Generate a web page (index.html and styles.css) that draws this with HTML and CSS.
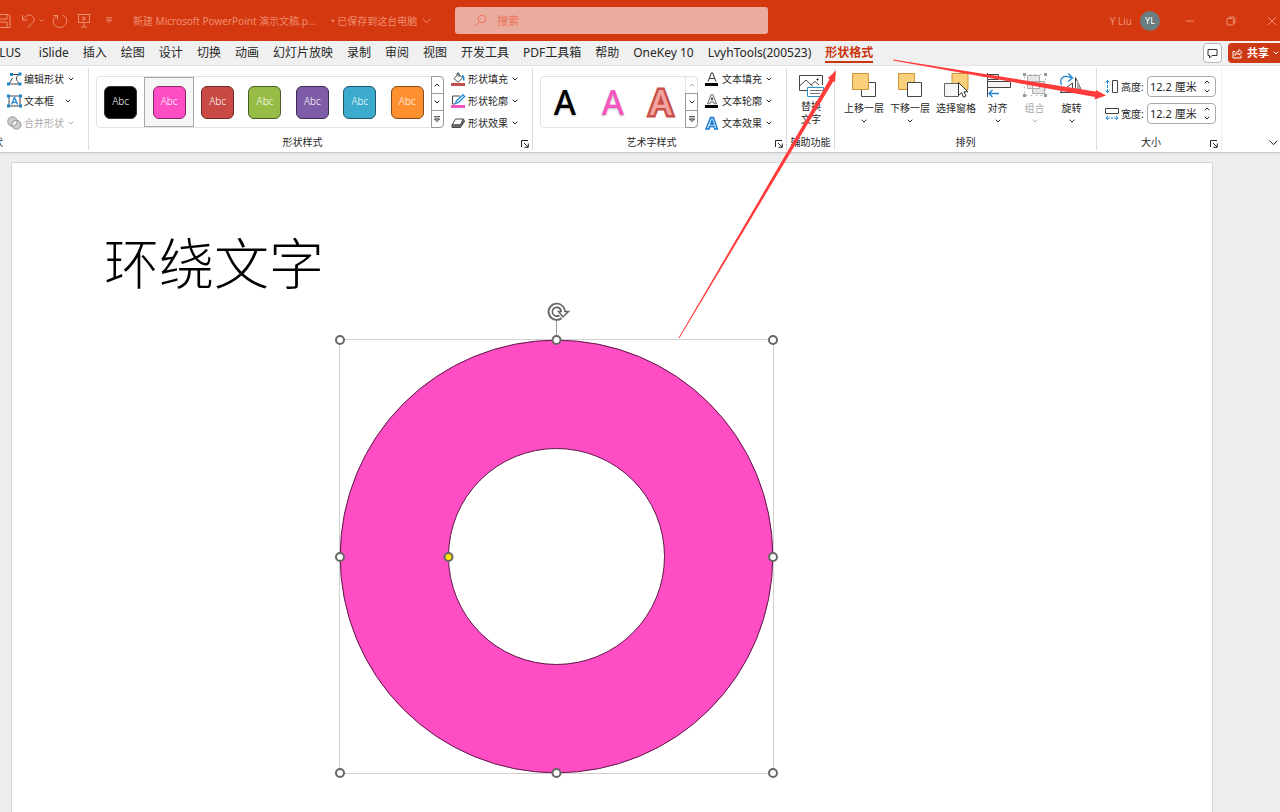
FILE: index.html
```html
<!DOCTYPE html>
<html lang="zh-CN">
<head>
<meta charset="utf-8">
<title>新建 Microsoft PowerPoint 演示文稿</title>
<link rel="stylesheet" href="styles.css">
</head>
<body>
<svg class="defs" aria-hidden="true">
  <symbol id="chev" viewBox="0 0 6 4"><path d="M.7.7 3 3 5.3.7" fill="none" stroke="currentColor"/></symbol>
  <symbol id="wide" viewBox="0 0 9 6"><path d="M.7.7 4.500 4.700 8.300.7" fill="none" stroke="currentColor"/></symbol>
  <symbol id="up" viewBox="0 0 6 4"><path d="M.7 3.3 3 1 5.3 3.3" fill="none" stroke="currentColor"/></symbol>
  <symbol id="more" viewBox="0 0 8 7"><path d="M1 .8h6M1.5 3 4 5.6 6.500 3z" fill="none" stroke="currentColor"/></symbol>
  <symbol id="launch" viewBox="0 0 8 8"><path d="M.5 7V.5H7M3 3l4 4M7.300 3.500v3.800H3.500" fill="none" stroke="currentColor"/></symbol>
</svg>

<header class="titlebar">
  <div class="quick">
    <button aria-label="保存"><svg width="11" height="16" viewBox="0 0 11 16"><path d="M-3 1.500H8.500L10 3v11.500H-3zM-1 1.500v4.500h8V1.500M-1 14V9h8v5" /></svg></button>
    <button class="undo" aria-label="撤消"><svg width="24" height="16" viewBox="0 0 24 16"><path d="M1.500 2v5h5M1.500 7C4 3 7.500 1 10.500 2.500c3 1.500 3.500 5 1 7.500L6.500 14.500M18.500 6.500l2 2 2-2"/></svg></button>
    <button class="redo" aria-label="重复"><svg width="16" height="16" viewBox="0 0 16 16"><path d="M1.500 2.500h4v4M5.500 2.500C1 4.500 0 9.500 3 12.500s8 2.500 10.500-1 1-8-3-9.500"/></svg></button>
    <button class="show" aria-label="放映"><svg width="14" height="16" viewBox="0 0 14 16"><path d="M.5 1.500h13M1.500 1.500V9.500h11V1.500M7 9.500v4M4 14h6M6 3.500v4l3-2z"/></svg></button>
    <button class="custom" aria-label="自定义"><svg width="8" height="7"><use href="#more"/></svg></button>
  </div>
  <div class="doc"><span>新建 Microsoft PowerPoint 演示文稿.p...</span><span class="saved">• 已保存到这台电脑</span><svg width="9" height="6"><use href="#wide"/></svg></div>
  <div class="search">
    <svg width="13" height="14" viewBox="0 0 13 14"><circle cx="8" cy="5" r="3.800"/><path d="M5.300 7.700 1 12.500"/></svg>
    <input type="text" placeholder="搜索" aria-label="搜索">
  </div>
  <div class="account">
    <span>Y Liu</span><span class="avatar">YL</span>
    <button aria-label="最小化"><svg width="10" height="10"><path d="M1 5h8"/></svg></button>
    <button aria-label="还原"><svg width="10" height="10"><rect x="1" y="2.500" width="6.500" height="6.500" rx="1"/><path d="M3 2.500V1h4.500Q9 1 9 2.500V7H7.500"/></svg></button>
    <button aria-label="关闭"><svg width="10" height="10"><path d="M1 1l8 8M9 1 1 9"/></svg></button>
  </div>
</header>

<nav class="tabs">
  <button class="clipped">PLUS</button><button class="islide">iSlide</button><button>插入</button><button>绘图</button><button>设计</button><button>切换</button><button>动画</button><button>幻灯片放映</button><button>录制</button><button>审阅</button><button>视图</button><button>开发工具</button><button>PDF工具箱</button><button>帮助</button><button>OneKey 10</button><button>LvyhTools(200523)</button><button class="active">形状格式</button>
  <div class="right">
    <button class="comment" aria-label="批注"><svg width="11" height="11" viewBox="0 0 11 11"><path d="M1 1.500h9v6H5L2.500 10V7.500H1z" fill="none" stroke="#333"/></svg></button>
    <button class="share"><svg width="11" height="11" viewBox="0 0 11 11"><path d="M3 3.500H1v6.500h8V7.500M3 7.500c0-3 1.500-4 4-4V1.500l3 3-3 2.500V5.500C5 5.500 4 6 3 7.500z" fill="none" stroke="#fff"/></svg>共享<svg width="6" height="4"><use href="#chev"/></svg></button>
  </div>
</nav>

<section class="ribbon">
  <div class="group">
    <div class="body insert">
      <div class="cmds">
        <button><svg class="ic" viewBox="0 0 15 14"><path d="M2 12 5.500 6M5 2.500h7C8 5 9 9 13 12M2.500 12h10" fill="none" stroke="#444"/><g fill="#1d85d0"><path d="M0 10.500h3v3H0zM11.500 10.500h3v3h-3zM3 1h3v3H3zM11.500.5h3v3h-3z"/></g></svg><span>编辑形状</span><svg class="ch"><use href="#chev"/></svg></button>
        <button><svg class="ic" viewBox="0 0 15 14"><path d="M2 2h11v10H2z" fill="none" stroke="#444"/><g fill="#1d85d0"><path d="M0 .5h3v3H0zM12 .5h3v3h-3zM0 10.500h3v3H0zM12 10.500h3v3h-3z"/></g><path d="M4.500 10.500 7.500 3.500l3 7M5.500 8.300h4" fill="none" stroke="#1d85d0" stroke-width="1.300"/></svg><span class="short">文本框</span><svg class="ch"><use href="#chev"/></svg></button>
        <button disabled><svg class="ic" viewBox="0 0 15 14"><circle cx="5.500" cy="5.500" r="4.800" fill="#ccc" stroke="#999"/><circle cx="9.500" cy="8.800" r="4.500" fill="#ccc" stroke="#999"/><path d="M5 8.500a4.500 4.500 0 0 1 5-4 4.800 4.800 0 0 1-5 5.500z" fill="#fff" stroke="#999"/></svg><span>合并形状</span><svg class="ch"><use href="#chev"/></svg></button>
      </div>
    </div>
    <div class="foot cut"><span>状</span></div>
  </div>

  <div class="group">
    <div class="body">
      <div class="gallery shapes">
        <button class="cell"><i class="t black">Abc</i></button><button class="cell sel"><i class="t pink">Abc</i></button><button class="cell"><i class="t red">Abc</i></button><button class="cell"><i class="t green">Abc</i></button><button class="cell"><i class="t purple">Abc</i></button><button class="cell"><i class="t blue">Abc</i></button><button class="cell"><i class="t orange">Abc</i></button>
        <div class="scroll"><button aria-label="上一行"><svg width="6" height="4"><use href="#up"/></svg></button><button aria-label="下一行"><svg width="6" height="4"><use href="#chev"/></svg></button><button aria-label="其他"><svg width="8" height="7"><use href="#more"/></svg></button></div>
      </div>
      <div class="cmds">
        <button><svg class="ic" viewBox="0 0 15 14"><path d="M3 6.500 7.500 2l4 4-4.500 4.300zM6 3.500V1.500q1-1.500 2 0V5" fill="#fff" stroke="#444"/><path d="M11 3.500q2.500 1 1.500 5" fill="none" stroke="#1d85d0" stroke-width="1.500"/><path d="M0 11h14v3H0z" fill="#c0504d"/></svg><span>形状填充</span><svg class="ch"><use href="#chev"/></svg></button>
        <button><svg class="ic" viewBox="0 0 15 14"><path d="M9 2H1.500v8H4" fill="none" stroke="#444"/><path d="M4.500 9.500 5.500 6.500 12 .8l1.700 1.700L7.500 8.500z" fill="#d6ecfa" stroke="#1d85d0" stroke-width="1.200"/><path d="M0 11h14v3H0z" fill="#f050c0"/></svg><span>形状轮廓</span><svg class="ch"><use href="#chev"/></svg></button>
        <button><svg class="ic" viewBox="0 0 15 14"><path d="M1 9 4.500 3h8L9.500 9z" fill="#fff" stroke="#444"/><path d="M1 9v2.500h8.500L13.500 5.500 12.500 3 9.500 9z" fill="#777" stroke="#444"/></svg><span>形状效果</span><svg class="ch"><use href="#chev"/></svg></button>
      </div>
    </div>
    <div class="foot launch"><span>形状样式</span><button aria-label="形状样式选项"><svg width="8" height="8"><use href="#launch"/></svg></button></div>
  </div>

  <div class="group">
    <div class="body">
      <div class="gallery words">
        <button class="cell"><b class="wa k">A</b></button><button class="cell"><b class="wa p">A</b></button><button class="cell"><b class="wa r">A</b></button>
        <div class="scroll"><button disabled aria-label="上一行"><svg width="6" height="4"><use href="#up"/></svg></button><button aria-label="下一行"><svg width="6" height="4"><use href="#chev"/></svg></button><button aria-label="其他"><svg width="8" height="7"><use href="#more"/></svg></button></div>
      </div>
      <div class="cmds">
        <button><svg class="ic" viewBox="0 0 15 14"><path d="M3 9.500 6.500.8h1L11 9.500M4.200 6.500h5.600" fill="none" stroke="#333"/><path d="M0 11h13v3H0z"/></svg><span>文本填充</span><svg class="ch"><use href="#chev"/></svg></button>
        <button><svg class="ic" viewBox="0 0 15 14"><path d="M2.500 9.800 6 .8h2l3.500 9H9.300L8.700 8H5.300l-.6 1.800zM6 6h2L7 3z" fill="#fff" stroke="#444" stroke-width=".8"/><path d="M0 11h13v3H0z"/></svg><span>文本轮廓</span><svg class="ch"><use href="#chev"/></svg></button>
        <button><svg class="ic" viewBox="0 0 15 14"><path d="M1 13 5.500 1.500h3L12.500 13H9.700L8.800 10.500H5L4 13zM5.800 8h2.500L7 4.500z" fill="#bfe0f7" stroke="#1576cc" stroke-width="1.300"/></svg><span>文本效果</span><svg class="ch"><use href="#chev"/></svg></button>
      </div>
    </div>
    <div class="foot launch"><span>艺术字样式</span><button aria-label="艺术字选项"><svg width="8" height="8"><use href="#launch"/></svg></button></div>
  </div>

  <div class="group">
    <div class="body">
      <button class="big alt"><svg width="26" height="26" viewBox="0 0 26 26"><path d="M9 18.500H1.500v-15h23V13" fill="#fff" stroke="#444"/><path d="M1.500 14 8 8l7 6.500M13 13l4-3.500 4 3.500" fill="none" stroke="#444"/><circle cx="19.500" cy="7.500" r="1"/><path d="M9.500 15.500h16v9h-16z" fill="#fff" stroke="#2b90cc"/><path d="M12 18.500h13M12 21.500h10" stroke="#777"/></svg><span>替换<br>文字</span></button>
    </div>
    <div class="foot"><span>辅助功能</span></div>
  </div>

  <div class="group">
    <div class="body arrange">
      <button class="big wide"><svg width="26" height="26" viewBox="0 0 26 26"><path d="M10.500 10.500h14v14h-14z" fill="#fff" stroke="#444"/><path d="M1.500 1.500h16v16h-16z" fill="#fbd07c" stroke="#cf9532"/></svg><span>上移一层</span><svg class="ch"><use href="#chev"/></svg></button>
      <button class="big wide"><svg width="26" height="26" viewBox="0 0 26 26"><path d="M1.500 1.500h16v16h-16z" fill="#fbd07c" stroke="#cf9532"/><path d="M10.500 10.500h14v14h-14z" fill="#fff" stroke="#444"/></svg><span>下移一层</span><svg class="ch"><use href="#chev"/></svg></button>
      <button class="big wide"><svg width="26" height="26" viewBox="0 0 26 26"><path d="M9 1.500h16v16H9z" fill="#fbd07c" stroke="#cf9532"/><path d="M1.500 11.500h14v13h-14z" fill="#f5f5f5" stroke="#666"/><path d="M15.500 10.500v13l3-2.800 2 4.500 2.500-1.200-2-4.200h4z" fill="#fff" stroke="#333"/></svg><span>选择窗格</span></button>
      <button class="big"><svg width="26" height="26" viewBox="0 0 26 26"><path d="M2.500 1v24" stroke="#444"/><path d="M2.500 2.500h11v5h-11zM2.500 9.500h23v6h-23z" fill="#f4f4f4" stroke="#444"/><path d="M4 21.500h10M7.500 18 4 21.500 7.500 25" fill="none" stroke="#1d85d0" stroke-width="1.300"/></svg><span>对齐</span><svg class="ch"><use href="#chev"/></svg></button>
      <button class="big" disabled><svg width="26" height="26" viewBox="0 0 26 26"><path d="M5.500 3.500h12v13h-12zM10.500 9.500h12v12h-12z" fill="#e6e6e6" stroke="#aaa"/><path d="M10.500 9.500h7v7h-7z" fill="#fff" stroke="#aaa"/><path d="M2.500 2.500h21v21h-21z" fill="none" stroke="#bbb" stroke-dasharray="2 3"/><path d="M1 1h3v3H1zM22 1h3v3h-3zM1 22h3v3H1zM22 22h3v3h-3z" fill="#999"/></svg><span>组合</span><svg class="ch"><use href="#chev"/></svg></button>
      <button class="big"><svg width="26" height="26" viewBox="0 0 26 26"><path d="M1 20.500h12.500V11zM16.500 20.500V5.500l7 15z" fill="#fff" stroke="#444"/><path d="M18 8v12h5z" fill="#aaa"/><path d="M2.500 13C-.5 5 6 2.500 13 6M9.500 1.500l4 4.500-4.500 3.500" fill="none" stroke="#1d85d0" stroke-width="1.300"/></svg><span>旋转</span><svg class="ch"><use href="#chev"/></svg></button>
    </div>
    <div class="foot"><span>排列</span></div>
  </div>

  <div class="group last">
    <div class="body size">
      <div class="field"><svg width="14" height="15" viewBox="0 0 14 15"><path d="M2.500 1v4M2.500 10v4M.5 3.500l2-2 2 2M.5 11.500l2 2 2-2M2.500 6v3" fill="none" stroke="#1d85d0"/><path d="M7.500 1.500h5v12h-5z" fill="#fff" stroke="#444"/></svg><label for="h">高度:</label><div class="spin"><input id="h" type="text" value="12.2 厘米"><span><button aria-label="增加高度"><svg width="6" height="4"><use href="#up"/></svg></button><button aria-label="减少高度"><svg width="6" height="4"><use href="#chev"/></svg></button></span></div></div>
      <div class="field"><svg width="14" height="15" viewBox="0 0 14 15"><path d="M.5 2.500h13v5H.5z" fill="#fff" stroke="#444"/><path d="M1 12h4M6 12h2M9 12h4M3 10l-2 2 2 2M11 10l2 2-2 2" fill="none" stroke="#1d85d0"/></svg><label for="w">宽度:</label><div class="spin"><input id="w" type="text" value="12.2 厘米"><span><button aria-label="增加宽度"><svg width="6" height="4"><use href="#up"/></svg></button><button aria-label="减少宽度"><svg width="6" height="4"><use href="#chev"/></svg></button></span></div></div>
    </div>
    <div class="foot launch"><span>大小</span><button aria-label="大小选项"><svg width="8" height="8"><use href="#launch"/></svg></button></div>
  </div>
  <button class="collapse" aria-label="折叠功能区"><svg width="9" height="6"><use href="#wide"/></svg></button>
</section>

<main class="stage">
  <div class="slide">
    <h1>环绕文字</h1>
    <svg class="donut" width="450" height="482" viewBox="332 300 450 482">
      <path d="M339.500 339.500h434v434h-434z" fill="none" stroke="#d0d0d0"/>
      <path d="M556.500 320v16" stroke="#999"/>
      <circle cx="556.500" cy="556.500" r="162.200" fill="none" stroke="#ff4dc4" stroke-width="108.500"/>
      <g fill="none" stroke="#5c1a48"><circle cx="556.500" cy="556.500" r="216.300"/><circle cx="556.500" cy="556.500" r="108"/></g>
      <g fill="#fff" stroke="#666" stroke-width="2"><circle cx="340" cy="340" r="4"/><circle cx="556.500" cy="340" r="4"/><circle cx="773" cy="340" r="4"/><circle cx="340" cy="557" r="4"/><circle cx="773" cy="557" r="4"/><circle cx="340" cy="773" r="4"/><circle cx="556.500" cy="773" r="4"/><circle cx="773" cy="773" r="4"/><circle cx="448.500" cy="557" r="4" fill="#ffe600"/></g>
      <g fill="none"><path d="M560.500 316.800A6.300 6.300 0 1 1 563 312" stroke="#666" stroke-width="5.500"/><path d="M558.500 311.500h10L563 317z" fill="#fff" stroke="#666" stroke-width="1.500"/><path d="M560.200 317A6.300 6.300 0 1 1 563 313" stroke="#fff" stroke-width="2"/></g>
    </svg>
  </div>
</main>

<svg class="arrows" width="1280" height="400" viewBox="0 0 1280 400" aria-hidden="true">
  <path d="M678.500 338 829.500 79.500 828 78 836 70.500 835 82 833.200 81.500 679.500 338zM893 59.500 1095.500 91.500 1096 90 1106 95.500 1094.500 99.500 1095 97 893 60.500z" fill="#ff3b3b"/>
</svg>
</body>
</html>
```
FILE: styles.css
```css
* { box-sizing: border-box; }
body {
  margin: 0;
  min-height: 100vh;
  display: flex;
  flex-direction: column;
  overflow: hidden;
  background: #eee;
  color: #262626;
  font: 11px/16px "Noto Sans", "Noto Sans CJK SC", sans-serif;
}
button, input { font: inherit; color: inherit; border: 0; padding: 0; background: none; }
button { display: flex; align-items: center; justify-content: center; white-space: nowrap; }
svg { flex: none; display: block; }
.defs { position: absolute; width: 0; height: 0; }

.titlebar { display: flex; align-items: center; height: 41px; background: #d4380f; color: #ee8f74; position: relative; }
.titlebar svg { fill: none; stroke: currentColor; }
.quick { display: flex; align-items: center; }
.undo { margin-left: 10px; }
.redo { margin-left: 7px; }
.show { margin-left: 9px; }
.custom { margin-left: 14px; }
.doc { display: flex; align-items: center; margin-left: 20px; font-size: 10px; color: #f08c70; white-space: nowrap; }
.saved { margin: 0 5px 0 15px; }
.search { position: absolute; left: 455px; top: 7px; width: 313px; height: 27px; background: #e9ac9e; border-radius: 3px; display: flex; align-items: center; gap: 10px; padding-left: 19px; color: #ee7258; }
.search input { width: 240px; outline: 0; }
.search input::placeholder { color: #ee7258; opacity: 1; }
.account { margin-left: auto; display: flex; align-items: center; font-size: 10px; padding-right: 3px; color: #ee8f74; }
.avatar { width: 20px; height: 20px; line-height: 20px; border-radius: 50%; background: #6b7d80; color: #fff; text-align: center; margin-left: 8px; font-size: 9px; }
.account button { margin-left: 31px; }
.account .avatar + button { margin-left: 25px; }

.tabs { display: flex; align-items: center; gap: 14px; height: 25px; background: #f0f0f0; border-bottom: 1px solid #e4e4e4; font-size: 12px; }
.tabs .clipped { margin-left: -8px; }
.tabs .islide { margin-left: 4px; }
.active { color: #c9350e; font-weight: 700; box-shadow: 0 2px #c9350e; }
.right { margin-left: auto; display: flex; gap: 6px; font-size: 11px; }
.comment { width: 19px; height: 20px; background: #fff; border: 1px solid #b5b5b5; border-radius: 4px; }
.share { height: 20px; gap: 4px; padding: 0 1px 0 4px; background: #cc3912; color: #fff; border-radius: 4px 0 0 4px; font-weight: 700; }

.ribbon { display: grid; grid-template-columns: 89px 444px 254px 48px 262px 125px 1fr; height: 87px; padding-top: 2px; background: #fff; border-bottom: 1px solid #c8c8c8; box-shadow: 0 1px 2px #ddd; font-size: 10px; }
.group { display: flex; flex-direction: column; position: relative; border-right: 1px solid #dcdcdc; margin-bottom: 5px; }
.last { border-color: #eee; }
.body { display: flex; height: 66px; padding-left: 7px; }
.foot { height: 16px; display: flex; justify-content: center; white-space: nowrap; }
.foot.launch { padding-right: 16px; }
.foot button { position: absolute; right: 3px; bottom: 2px; }
.foot.cut { width: 3px; justify-content: flex-end; }
.cmds { display: flex; flex-direction: column; }
.cmds button { height: 22px; gap: 2px; justify-content: flex-start; }
.cmds span { min-width: 42px; text-align: left; }
.cmds .short { min-width: 39px; }
.ic { width: 15px; height: 14px; }
.ch { width: 6px; height: 4px; }
button:disabled { color: #aaa; }

.gallery { display: flex; height: 52px; margin: 8px 7px 0 0; border: 1px solid #e2e2e2; border-radius: 4px; }
.shapes { width: 348px; }
.words { width: 158px; }
.cell { flex: 1; }
.sel { border: 1px solid #a8a8a8; background: #f6f6f6; }
.t { width: 33px; height: 33px; line-height: 28px; border: 1px solid #333; border-radius: 6px; font-style: normal; font-size: 10px; font-weight: 300; color: #fff; }
.black { background: #000; }
.pink { background: #ff4dc4; border-color: #842966; }
.red { background: #c94a45; border-color: #6b2825; }
.green { background: #97bd47; border-color: #4a5c26; }
.purple { background: #7e5ca8; border-color: #3d2c54; }
.blue { background: #3cabcd; border-color: #1e5668; }
.orange { background: #ff902f; border-color: #804a1b; }
.scroll { width: 13px; margin: -1px -1px -1px 0; display: flex; flex-direction: column; }
.scroll button { flex: 1; border: 1px solid #999; margin-top: -1px; }
.scroll button:first-child { margin-top: 0; border-radius: 0 4px 0 0; }
.scroll button:last-child { border-radius: 0 0 4px 0; }
.scroll button:disabled { border-color: #e2e2e2; }
.wa { font-weight: 500; font-size: 34px; line-height: 50px; text-shadow: 0 1px 2px #bbb; }
.k { color: #000; }
.p { color: #f556c0; }
.r { color: #c9504a; -webkit-text-stroke: 5px #c9504a; paint-order: stroke; color: #f2a5a0; text-shadow: none; }

.big { flex-direction: column; justify-content: flex-start; width: 37px; padding-top: 4px; line-height: 13px; }
.big.wide { width: 46px; }
.big span { margin: 4px 0; }
.big.alt { width: 34px; }
.big.alt span { margin: 2px 0; }
.arrange { padding-left: 6px; }
.size { flex-direction: column; padding: 8px 0 0 8px; gap: 6px; }
.field { display: flex; align-items: center; gap: 2px; height: 21px; }
.field label { width: 24px; white-space: nowrap; }
.spin { display: flex; width: 69px; height: 21px; border: 1px solid #aaa; border-radius: 4px; }
.spin input { flex: 1; width: 0; padding-left: 2px; outline: 0; }
.spin span { width: 16px; display: flex; flex-direction: column; justify-content: center; gap: 5px; }
.spin input { font-size: 11px; }
.collapse { justify-self: end; align-self: end; margin: 0 2px 9px 0; }

.stage { flex: 1; display: flex; padding: 9px 67px 0 11px; min-height: 0; }
.slide { flex: 1; position: relative; background: #fff; border: 1px solid #d4d4d4; border-bottom: 0; }
h1 { margin: 58px 0 0 92px; font: 300 55px/78px "Noto Sans CJK SC", sans-serif; color: #000; }
.donut { position: absolute; left: 320px; top: 137px; }
.arrows { position: absolute; left: 0; top: 0; pointer-events: none; }
```
